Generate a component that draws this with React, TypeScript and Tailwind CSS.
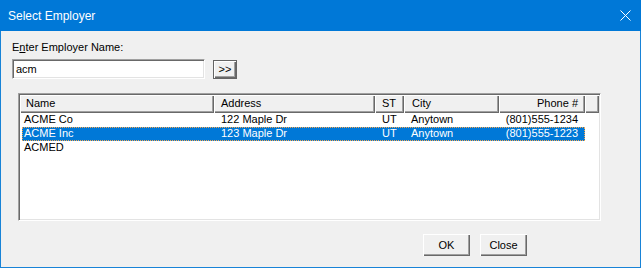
const raised =
  "bg-[#f0f0f0] shadow-[inset_1px_1px_0_#ffffff,inset_-1px_-1px_0_#696969,inset_-2px_-2px_0_#a0a0a0]";
const sunken =
  "border border-t-[#a0a0a0] border-l-[#a0a0a0] border-b-white border-r-white shadow-[inset_1px_1px_0_#696969,inset_-1px_-1px_0_#e3e3e3]";

type Row = { name: string; address: string; st: string; city: string; phone: string };

const rows: Row[] = [
  { name: "ACME Co", address: "122 Maple Dr", st: "UT", city: "Anytown", phone: "(801)555-1234" },
  { name: "ACME Inc", address: "123 Maple Dr", st: "UT", city: "Anytown", phone: "(801)555-1223" },
  { name: "ACMED", address: "", st: "", city: "", phone: "" },
];

export default function App() {
  return (
    <div
      className="flex h-[268px] w-[641px] flex-col border border-t-0 border-[#1883d7] bg-[#f0f0f0] text-[11px] leading-[14px] text-black"
      style={{ fontFamily: '"Liberation Sans", Arial, sans-serif' }}
    >
      {/* title bar */}
      <div className="-mx-px flex h-[31px] items-center justify-between bg-[#0078d7] pl-[8px] pr-[10px] text-[12px] text-white">
        <span>Select Employer</span>
        <svg width="11" height="11" viewBox="0 0 11 11" className="text-white">
          <path d="M0.5 0.5 L10.5 10.5 M10.5 0.5 L0.5 10.5" stroke="currentColor" strokeWidth="1" />
        </svg>
      </div>

      <div className="flex flex-1 flex-col pl-[11px]">
        <div className="mt-[10px] h-[13px] leading-[13px]">
          E<span className="underline underline-offset-1">n</span>ter Employer Name:
        </div>

        <div className="mt-[5px] flex items-start gap-[8px]">
          <div className={`h-[20px] w-[193px] bg-white pl-[3px] leading-[18px] ${sunken}`}>acm</div>
          <button
            className={`mt-px h-[19px] w-[24px] border border-[#646464] text-[11px] leading-[15px] ${raised}`}
          >
            &gt;&gt;
          </button>
        </div>

        <div className={`mt-[14px] ml-[6px] h-[128px] w-[583px] bg-white ${sunken} p-px`}>
          {/* header */}
          <div className="flex h-[18px] leading-[17px]">
            <div className={`w-[194px] pl-[6px] ${raised}`}>Name</div>
            <div className={`w-[161px] pl-[7px] ${raised}`}>Address</div>
            <div className={`w-[29px] pl-[7px] ${raised}`}>ST</div>
            <div className={`w-[95px] pl-[8px] ${raised}`}>City</div>
            <div className={`w-[86px] pr-[7px] text-right ${raised}`}>Phone #</div>
            <div className={`flex-1 ${raised}`} />
          </div>

          <div className="pl-[2px]">
            {rows.map((r, i) => {
              const sel = i === 1;
              return (
                <div
                  key={r.name}
                  className={`flex h-[14px] w-[563px] leading-[13px] ${
                    sel ? "bg-[#0078d7] text-white outline-1 outline-dotted -outline-offset-1 outline-[#f7a74e]" : ""
                  }`}
                >
                  <div className="w-[192px] pl-[2px]">{r.name}</div>
                  <div className="w-[161px] pl-[7px]">{r.address}</div>
                  <div className="w-[29px] pl-[7px]">{r.st}</div>
                  <div className="w-[95px] pl-[7px]">{r.city}</div>
                  <div className="w-[86px] pr-[7px] text-right">{r.phone}</div>
                </div>
              );
            })}
          </div>
        </div>

        <div className="mt-[13px] flex gap-[10px] pl-[411px]">
          <button className={`h-[22px] w-[47px] ${raised}`}>OK</button>
          <button className={`h-[22px] w-[47px] ${raised}`}>Close</button>
        </div>
      </div>
    </div>
  );
}
